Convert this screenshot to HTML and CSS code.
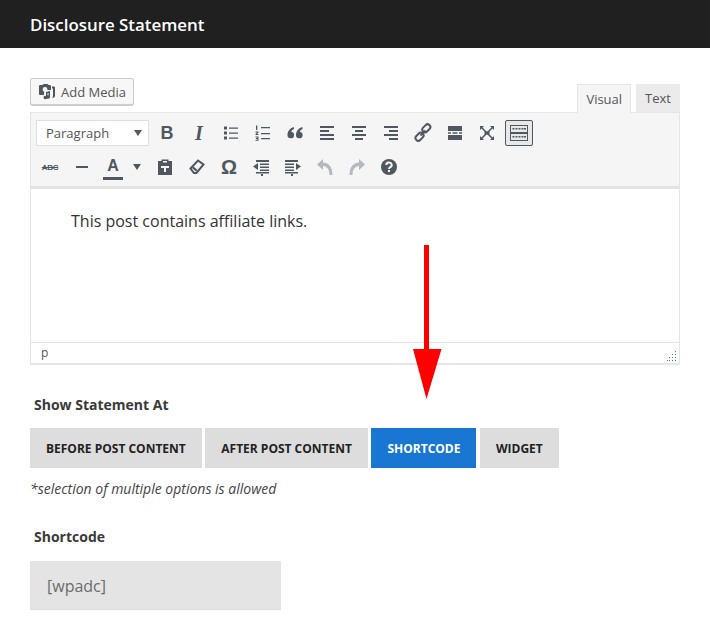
FILE: index.html
```html
<!DOCTYPE html>
<html lang="en">
<head>
  <meta charset="UTF-8">
  <title>Disclosure Statement</title>
  <link rel="stylesheet" href="styles.css">
</head>
<body>

<div class="title-bar">Disclosure Statement</div>

<div class="panel">
  <div class="editor-top">
    <button class="media-button">
      <svg width="18" height="18" viewBox="0 0 18 18"><path class="ic" d="M2 2h2.500l1-1h4l1 1H12a1 1 0 0 1 1 1v4H9.500A3.500 3.500 0 0 0 6 10.500V12H2a1 1 0 0 1-1-1V3a1 1 0 0 1 1-1z"/><circle class="ic-cut" cx="7" cy="6.500" r="2.400"/><path class="ic" d="M8 9l4-1v6a2 1.700 0 1 1-1.500-1.600V10l-1 .3v4.200a2 1.700 0 1 1-1.500-1.600zM14 3.500h2a1 1 0 0 1 1 1V13a2.200 1.800 0 0 1-3 1.600A2.500 2.500 0 0 0 15 13V5.500h-1z"/></svg>
      Add Media
    </button>
    <div class="tabs">
      <div class="tab tab-active">Visual</div>
      <div class="tab">Text</div>
    </div>
  </div>

  <div class="editor">
    <div class="toolbar">
      <div class="tool-row">
        <div class="format-select">Paragraph<span class="caret"></span></div>
        <span class="tool tool-text bold">B</span>
        <span class="tool tool-text italic">I</span>
        <span class="tool"><svg width="20" height="20" viewBox="0 0 20 20"><path class="ic" d="M3 3.500h3v3H3zM3 8.500h3v3H3zM3 13.500h3v3H3z"/><path class="ic" d="M8 4.500h9v1.300H8zM8 9.500h9v1.300H8zM8 14.500h9v1.300H8z"/></svg></span>
        <span class="tool"><svg width="20" height="20" viewBox="0 0 20 20"><path class="ic" d="M3 2.500h1.300V7H3zM2.500 8.500h3v1l-1.500 1.500h1.500v1h-3v-1l1.500-1.500H2.500zM2.500 13.500h3v4.200h-3v-1h2v-.600h-1.500v-1h1.500v-.600h-2z"/><path class="ic" d="M8 4h9v1.300H8zM8 10h9v1.300H8zM8 15h9v1.300H8z"/></svg></span>
        <span class="tool"><svg width="20" height="20" viewBox="0 0 20 20"><path class="ic" d="M9 4C5 5 2.500 8 2.500 12a3.300 3.300 0 1 0 3.800-3.200C6.500 7.500 7.800 6.500 9 6zM17.500 4c-4 1-6.500 4-6.500 8a3.300 3.300 0 1 0 3.800-3.200c.2-1.300 1.500-2.300 2.700-2.800z"/></svg></span>
        <span class="tool"><svg width="20" height="20" viewBox="0 0 20 20"><path class="ic" d="M3 3h14v2H3zM3 7h9v2H3zM3 11h14v2H3zM3 15h14v2H3z"/></svg></span>
        <span class="tool"><svg width="20" height="20" viewBox="0 0 20 20"><path class="ic" d="M3 3h14v2H3zM6 7h8v2H6zM3 11h14v2H3zM6 15h8v2H6z"/></svg></span>
        <span class="tool"><svg width="20" height="20" viewBox="0 0 20 20"><path class="ic" d="M3 3h14v2H3zM8 7h9v2H8zM3 11h14v2H3zM8 15h9v2H8z"/></svg></span>
        <span class="tool"><svg width="20" height="20" viewBox="0 0 20 20"><g fill="none" stroke="#50575e" stroke-width="2"><rect x="9" y="2.500" width="9" height="5.500" rx="2.700" transform="rotate(-45 13.500 5.500)"/><rect x="2" y="11" width="9" height="5.500" rx="2.700" transform="rotate(-45 6.500 13.700)"/><path d="M7.500 12.500l5-5"/></g></svg></span>
        <span class="tool"><svg width="20" height="20" viewBox="0 0 20 20"><path class="ic" d="M3 3h14v5H3zM3 9.200h3v1.600H3zM7.500 9.200h5v1.600h-5zM14 9.200h3v1.600h-3zM3 12h14v5H3z"/></svg></span>
        <span class="tool"><svg width="20" height="20" viewBox="0 0 20 20"><path fill="none" stroke="#50575e" stroke-width="1.500" d="M4 4l12 12M16 4L4 16"/><path class="ic" d="M7.500 8.500h5v3h-5zM3 3h4L3 7zM17 3h-4l4 4zM3 17h4l-4-4zM17 17h-4l4-4z"/></svg></span>
        <span class="tool tool-on"><svg width="20" height="20" viewBox="0 0 20 20"><g fill="none" stroke="#50575e" stroke-width="1"><rect x="1.500" y="2.500" width="17" height="7"/><rect x="1.500" y="10.500" width="17" height="7"/></g><path class="ic" d="M3.500 5h2v1.500h-2zM6.500 5h2v1.500h-2zM9.500 5h2v1.500h-2zM12.500 5h2v1.500h-2zM15 5h2v1.500h-2zM3.500 13h2v1.500h-2zM6.500 13h2v1.500h-2zM9.500 13h2v1.500h-2zM12.500 13h2v1.500h-2zM15 13h2v1.500h-2z"/></svg></span>
      </div>
      <div class="tool-row tool-row-second">
        <span class="tool tool-text abc">ABC</span>
        <span class="tool"><svg width="20" height="20" viewBox="0 0 20 20"><path class="ic" d="M4 9h12v2H4z"/></svg></span>
        <span class="tool tool-text color">A</span>
        <span class="caret caret-color"></span>
        <span class="tool"><svg width="20" height="20" viewBox="0 0 20 20"><path class="ic" fill-rule="evenodd" d="M3 4h3.500V2.500h7V4H17v14H3zM8 4v1.500h4V4zM6 9v2h3v4h2v-4h3V9z"/></svg></span>
        <span class="tool"><svg width="20" height="20" viewBox="0 0 20 20"><path fill="none" stroke="#50575e" stroke-width="2" d="M3.500 11.500L11 3.500l5.500 4-7 8.500H7z"/><path class="ic" d="M9 14.500l-4-3.500 1.500-1.500 4 3.500z"/></svg></span>
        <span class="tool tool-text omega">Ω</span>
        <span class="tool"><svg width="20" height="20" viewBox="0 0 20 20"><path class="ic" d="M5 3h13v2H5zM9 6.500h9v1.500H9zM9 9.500h9v1.500H9zM9 12.500h9V14H9zM5 15h13v1.500H5zM10 17h2v2h-2zM2 9.500l5-3.500v7z"/></svg></span>
        <span class="tool"><svg width="20" height="20" viewBox="0 0 20 20"><path class="ic" d="M2 3h13v2H2zM2 6.500h9v1.500H2zM2 9.500h9v1.500H2zM2 12.500h9V14H2zM2 15h13v1.500H2zM8 17h2v2H8zM18 9.500l-5-3.500v7z"/></svg></span>
        <span class="tool"><svg width="20" height="20" viewBox="0 0 20 20"><path class="ic-off" d="M2 7.500L8 2v3.500c5 0 9.500 4 9.500 12.500h-3c0-5.500-2.500-9-6.500-9v4z"/></svg></span>
        <span class="tool"><svg width="20" height="20" viewBox="0 0 20 20"><path class="ic-off" d="M18 7.500L12 2v3.500C7 5.500 2.500 9.500 2.500 18h3c0-5.500 2.500-9 6.500-9v4z"/></svg></span>
        <span class="tool"><svg width="20" height="20" viewBox="0 0 20 20"><circle class="ic" cx="10" cy="10" r="8"/><path fill="none" stroke="#f5f5f5" stroke-width="2" d="M7.300 8a2.700 2.500 0 1 1 3.700 2.300c-.7.300-1 .7-1 1.700"/><path fill="#f5f5f5" d="M9 13h2v2H9z"/></svg></span>
      </div>
    </div>
    <div class="editor-body">This post contains affiliate links.</div>
    <div class="status-bar">p
      <svg class="resize-grip" width="10" height="10" viewBox="0 0 10 10"><path fill="#3f8f3f" d="M8 0h1v1H8zM8 3h1v1H8zM5 3h1v1H5zM8 6h1v1H8zM5 6h1v1H5zM2 6h1v1H2zM8 9h1v1H8zM5 9h1v1H5zM2 9h1v1H2zM0 9h1v1H0z"/></svg>
    </div>
  </div>

  <div class="field-label statement-label">Show Statement At</div>
  <div class="option-row">
    <div class="option">Before Post Content</div>
    <div class="option">After Post Content</div>
    <div class="option option-on">Shortcode</div>
    <div class="option">Widget</div>
  </div>
  <div class="note">*selection of multiple options is allowed</div>

  <div class="field-label shortcode-label">Shortcode</div>
  <div class="shortcode-box">[wpadc]</div>
</div>

<!-- red annotation arrow laid over the screenshot -->
<svg class="arrow" width="30" height="160" viewBox="0 0 30 160">
  <path fill="#ff0000" d="M11 0h5v104h12.500L13.500 154 0 104h11z"/>
</svg>

</body>
</html>
```

FILE: styles.css
```css
body {
    margin: 0;
    padding: 0;
    background-color: #ffffff;
    font-family: "Open Sans", "Liberation Sans", sans-serif;
    color: #32373c;
}

.title-bar {
    height: 48px;
    line-height: 50px;
    padding-left: 30px;
    background-color: #202020;
    color: #ffffff;
    font-size: 16.900px;
    font-weight: 600;
}

.panel {
    padding: 30px 30px 0 30px;
}

.editor-top {
    display: flex;
    justify-content: space-between;
    align-items: flex-end;
    height: 34px;
}

.media-button {
    display: flex;
    align-items: center;
    gap: 5px;
    width: 104px;
    height: 28px;
    margin-bottom: 6px;
    padding: 0 0 0 7px;
    box-sizing: border-box;
    border: 1px solid #cccccc;
    border-bottom-width: 2px;
    border-radius: 3px;
    background-color: #f7f7f7;
    color: #555555;
    font-family: inherit;
    font-size: 13px;
}

.ic {
    fill: #50575e;
}

.ic-cut {
    fill: #f7f7f7;
}

.ic-off {
    fill: #b4b9be;
}

.tabs {
    display: flex;
    gap: 5px;
}

.tab {
    height: 28px;
    line-height: 28px;
    padding: 0 9px;
    background-color: #ebebeb;
    color: #555555;
    font-size: 13px;
}

.tab-active {
    position: relative;
    height: 29px;
    margin-bottom: -1px;
    padding: 0 8px;
    box-sizing: border-box;
    border: 1px solid #e5e5e5;
    border-bottom: none;
    background-color: #f5f5f5;
}

.editor {
    border: 1px solid #e5e5e5;
    border-bottom-width: 2px;
}

.toolbar {
    height: 73px;
    box-sizing: content-box;
    background-color: #f5f5f5;
    border-bottom: 3px solid #e2e2e2;
}

.tool-row {
    display: flex;
    align-items: center;
    height: 26px;
    padding: 7px 0 0 5px;
}

.tool-row-second {
    padding: 8px 0 0 3px;
}

.format-select {
    display: flex;
    align-items: center;
    justify-content: space-between;
    width: 113px;
    height: 26px;
    margin-right: 2px;
    padding: 0 6px 0 9px;
    box-sizing: border-box;
    border: 1px solid #e0e0e0;
    background-color: #ffffff;
    color: #555555;
    font-size: 13px;
}

.caret {
    width: 0;
    height: 0;
    border-left: 4px solid transparent;
    border-right: 4px solid transparent;
    border-top: 6px solid #50575e;
}

.caret-color {
    margin: 0 8px 0 4px;
}

.tool {
    display: flex;
    align-items: center;
    justify-content: center;
    width: 32px;
    height: 26px;
    flex-shrink: 0;
}

.tool-on {
    width: 28px;
    margin-left: 2px;
    box-sizing: border-box;
    border: 1px solid #50575e;
    border-radius: 2px;
    background-color: #e8e8e8;
}

.tool-text {
    color: #50575e;
    font-family: "Liberation Sans", sans-serif;
}

.bold {
    font-size: 18px;
    font-weight: 700;
}

.italic {
    font-family: "Liberation Serif", serif;
    font-size: 20px;
    font-weight: 700;
    font-style: italic;
}

.abc {
    font-size: 8px;
    font-weight: 700;
    text-decoration: line-through;
    letter-spacing: -0.3px;
}

.color {
    height: 22px;
    width: 20px;
    margin: 0 6px 0 5px;
    border-bottom: 3px solid #50575e;
    font-size: 16px;
    font-weight: 700;
}

.omega {
    font-size: 20px;
    font-weight: 700;
}

.editor-body {
    height: 153px;
    padding: 20px 0 0 40px;
    box-sizing: border-box;
    background-color: #ffffff;
    font-size: 16px;
    line-height: 24px;
    color: #333333;
}

.status-bar {
    position: relative;
    height: 21px;
    line-height: 19px;
    padding-left: 10px;
    border-top: 1px solid #e5e5e5;
    box-sizing: border-box;
    color: #555555;
    font-size: 12px;
}

.resize-grip {
    position: absolute;
    right: 2px;
    bottom: 2px;
}

.field-label {
    padding-left: 4px;
    color: #3a3a3a;
    font-size: 14px;
    font-weight: 700;
}

.statement-label {
    margin-top: 30px;
    line-height: 20px;
}

.option-row {
    display: flex;
    gap: 3.500px;
    margin-top: 13px;
}

.option {
    height: 40px;
    line-height: 41px;
    padding: 0 16px;
    background-color: #dddddd;
    color: #222222;
    font-size: 12px;
    font-weight: 700;
    text-transform: uppercase;
}

.option-on {
    background-color: #1976d2;
    color: #ffffff;
}

.note {
    margin-top: 11px;
    line-height: 20px;
    font-size: 14px;
    font-style: italic;
    color: #444444;
}

.shortcode-label {
    margin-top: 28px;
    line-height: 20px;
}

.shortcode-box {
    width: 251px;
    height: 49px;
    line-height: 50px;
    margin-top: 14px;
    padding-left: 17px;
    box-sizing: border-box;
    border-bottom: 1px solid #dddddd;
    background-color: #e4e4e4;
    color: #6b6b6b;
    font-size: 16px;
}

.arrow {
    position: absolute;
    left: 413px;
    top: 245px;
}
```
